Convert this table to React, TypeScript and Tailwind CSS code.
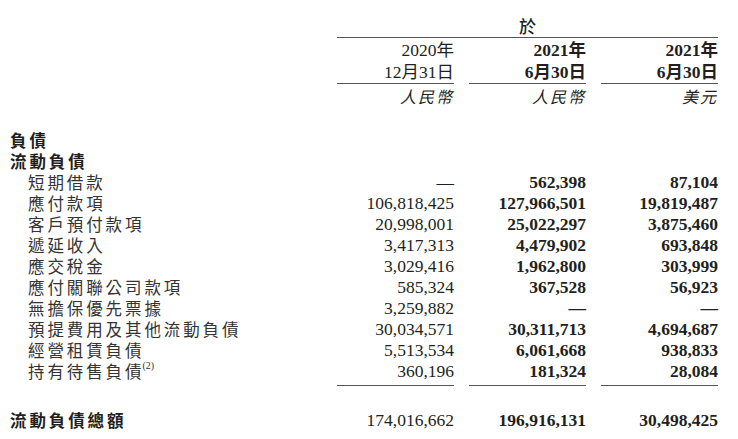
const serif = "font-['Liberation_Serif','Noto_Sans_CJK_TC',serif]";
const cjk = "font-['Noto_Sans_CJK_TC','Noto_Sans_CJK_SC',sans-serif]";

type Row = { label: string; sup?: string; v: [string, string, string] };

const rows: Row[] = [
  { label: '短期借款', v: ['—', '562,398', '87,104'] },
  { label: '應付款項', v: ['106,818,425', '127,966,501', '19,819,487'] },
  { label: '客戶預付款項', v: ['20,998,001', '25,022,297', '3,875,460'] },
  { label: '遞延收入', v: ['3,417,313', '4,479,902', '693,848'] },
  { label: '應交稅金', v: ['3,029,416', '1,962,800', '303,999'] },
  { label: '應付關聯公司款項', v: ['585,324', '367,528', '56,923'] },
  { label: '無擔保優先票據', v: ['3,259,882', '—', '—'] },
  { label: '預提費用及其他流動負債', v: ['30,034,571', '30,311,713', '4,694,687'] },
  { label: '經營租賃負債', v: ['5,513,534', '6,061,668', '938,833'] },
  { label: '持有待售負債', sup: '(2)', v: ['360,196', '181,324', '28,084'] },
];

function Cells({ v }: { v: [string, string, string] }) {
  return (
    <>
      <div className={`w-[117px] text-right ${serif}`}>{v[0]}</div>
      <div className={`w-[117px] ml-[15px] text-right font-bold ${serif}`}>{v[1]}</div>
      <div className={`w-[117px] ml-[15px] text-right font-bold ${serif}`}>{v[2]}</div>
    </>
  );
}

export default function App() {
  return (
    <div className="w-[738px] h-[439px] bg-white text-[#231f20] pl-[10px] pt-[14px] overflow-hidden">
      {/* Header */}
      <div className="flex">
        <div className="w-[327px]" />
        <div className="w-[381px]">
          <div className={`h-[23px] leading-[23px] text-center text-[17px] font-medium ${cjk}`}>於</div>
          <div className="h-px bg-[#555]" />
          <div className="h-[2px]" />
          <div className="flex h-[21px] leading-[21px] items-center text-[17.5px]">
            <div className={`w-[117px] text-right ${serif}`}>2020年</div>
            <div className={`w-[117px] ml-[15px] text-right font-bold ${serif}`}>2021年</div>
            <div className={`w-[117px] ml-[15px] text-right font-bold ${serif}`}>2021年</div>
          </div>
          <div className="flex h-[22px] leading-[22px] items-center text-[17.5px]">
            <div className={`w-[117px] text-right ${serif}`}>12月31日</div>
            <div className={`w-[117px] ml-[15px] text-right font-bold ${serif}`}>6月30日</div>
            <div className={`w-[117px] ml-[15px] text-right font-bold ${serif}`}>6月30日</div>
          </div>
          <div className="flex">
            <div className="w-[117px] h-px bg-[#555]" />
            <div className="w-[117px] ml-[15px] h-px bg-[#555]" />
            <div className="w-[117px] ml-[15px] h-px bg-[#555]" />
          </div>
          <div className={`flex h-[24px] leading-[24px] items-center text-[16px] italic tracking-[2px] ${cjk}`}>
            <div className="w-[117px] text-right">人民幣</div>
            <div className="w-[117px] ml-[15px] text-right">人民幣</div>
            <div className="w-[117px] ml-[15px] text-right">美元</div>
          </div>
        </div>
      </div>

      {/* Body */}
      <div className="mt-[22px] text-[17.5px] leading-[21px]">
        <div className={`h-[21px] flex items-center font-bold text-[16.5px] tracking-[2.9px] ${cjk}`}>負債</div>
        <div className={`h-[21px] flex items-center font-bold text-[16.5px] tracking-[2.9px] ${cjk}`}>流動負債</div>
        {rows.map(r => (
          <div key={r.label} className="h-[21px] flex items-center">
            <div className={`w-[327px] pl-[18px] text-[16.5px] tracking-[2.9px] text-[#333] ${cjk}`}>
              {r.label}
              {r.sup && (
                <span className={`inline-block align-top text-[10px] leading-[10px] tracking-normal -ml-[2px] ${serif}`}>
                  {r.sup}
                </span>
              )}
            </div>
            <Cells v={r.v} />
          </div>
        ))}
        <div className="flex mt-[3px]">
          <div className="w-[327px]" />
          <div className="w-[117px] h-px bg-[#555]" />
          <div className="w-[117px] ml-[15px] h-px bg-[#555]" />
          <div className="w-[117px] ml-[15px] h-px bg-[#555]" />
        </div>
        <div className="h-[22px] leading-[22px] mt-[23px] flex items-center">
          <div className={`w-[327px] font-bold text-[16.5px] tracking-[2.9px] ${cjk}`}>流動負債總額</div>
          <Cells v={['174,016,662', '196,916,131', '30,498,425']} />
        </div>
      </div>
    </div>
  );
}
